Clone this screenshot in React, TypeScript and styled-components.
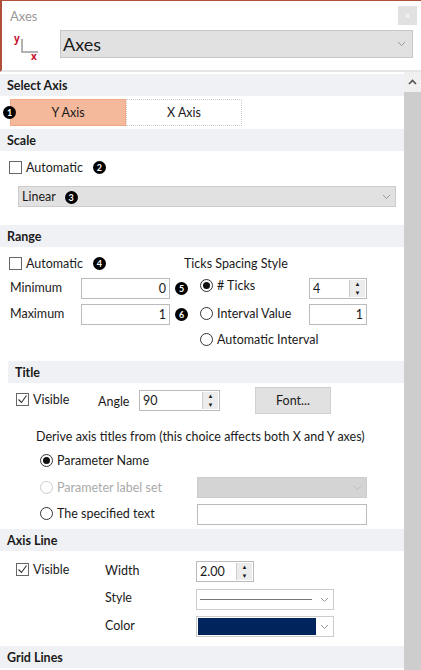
import React from "react";
import styled, { createGlobalStyle } from "styled-components";

const G = createGlobalStyle`
  html,body{margin:0;padding:0;background:#fff;}
  body{font-family:Lato,"Noto Sans",sans-serif;font-size:12.5px;color:#1a1a1a;width:421px;height:670px;overflow:hidden;}
`;
const Win = styled.div`width:421px;height:670px;border-top:1px solid #b0503a;box-sizing:border-box;display:flex;flex-direction:column;`;
const TitleBar = styled.div`height:29px;display:flex;align-items:center;justify-content:space-between;padding:0 4px 0 8px;color:#9a9a9a;font-size:13px;border-left:2px solid #b0503a;`;
const Close = styled.div`width:19px;height:19px;background:#e1e1e1;color:#fff;font-size:9px;display:flex;align-items:center;justify-content:center;`;
const Header = styled.div`display:flex;align-items:flex-start;padding-left:2px;border-left:2px solid #b0503a;border-bottom:2px solid #e6e6e6;box-sizing:border-box;height:42px;`;
const IconBox = styled.div`width:56px;height:40px;`;
const BigSelect = styled.div`flex:0 0 353px;height:28px;background:#e1e1e1;border:1px solid #c8c8c8;box-sizing:border-box;display:flex;align-items:center;justify-content:space-between;padding:0 6px 0 2px;font-size:18px;`;
const Body = styled.div`flex:1;display:flex;min-height:0;`;
const Content = styled.div`flex:1;display:flex;flex-direction:column;overflow:hidden;padding-top:2px;`;
const Scroll = styled.div`width:17px;display:flex;flex-direction:column;background:#f0f0f0;`;
const Up = styled.div`height:20px;display:flex;align-items:center;justify-content:center;`;
const Thumb = styled.div`flex:1;background:#cdcdcd;`;
const Head = styled.div<{ $indent?: number }>`height:22px;background:#f0f1f4;font-weight:700;font-size:12.5px;display:flex;align-items:center;padding-left:7px;margin-left:${p => p.$indent || 0}px;`;
const Sec = styled.div<{ $h: number; $indent?: number }>`height:${p => p.$h}px;position:relative;margin-left:${p => p.$indent || 0}px;`;
const Row = styled.div<{ $top: number; $left: number }>`position:absolute;top:${p => p.$top + 1}px;left:${p => p.$left}px;display:flex;align-items:center;gap:4px;white-space:nowrap;`;
const Seg = styled.div<{ $on?: boolean }>`width:116px;height:27px;display:flex;align-items:center;justify-content:center;background:${p => p.$on ? "#f4b89a" : "#fff"};border:1px ${p => p.$on ? "solid #f0a888" : "dotted #ccc"};box-sizing:border-box;`;
const Badge = styled.span`width:13px;height:13px;border-radius:50%;background:#000;color:#fff;font-size:9px;font-weight:700;display:inline-flex;align-items:center;justify-content:center;`;
const Box = styled.span`width:13px;height:13px;border:1px solid #666;box-sizing:border-box;display:inline-flex;align-items:center;justify-content:center;`;
const Radio = styled.span<{ $dis?: boolean }>`width:13px;height:13px;border-radius:50%;border:1px solid ${p => p.$dis ? "#ccc" : "#333"};box-sizing:border-box;display:inline-flex;align-items:center;justify-content:center;`;
const Dot = styled.span`width:7px;height:7px;border-radius:50%;background:#111;`;
const Input = styled.div<{ $w: number; $right?: boolean; $bg?: string }>`width:${p => p.$w}px;height:21px;border:1px solid #bbb;box-sizing:border-box;background:${p => p.$bg || "#fff"};display:flex;align-items:center;justify-content:${p => p.$right ? "flex-end" : "space-between"};padding:0 3px;`;
const Spin = styled.div`width:15px;height:17px;background:#ececec;border-left:1px solid #ccc;display:flex;flex-direction:column;align-items:center;justify-content:space-around;font-size:6px;line-height:6px;margin-right:-2px;`;
const Sel = styled.div<{ $w: number; $bg?: string }>`width:${p => p.$w}px;height:21px;background:${p => p.$bg || "#fff"};border:1px solid #ccc;box-sizing:border-box;display:flex;align-items:center;justify-content:space-between;padding:0 4px 0 3px;`;
const Btn = styled.div`width:74px;height:25px;background:#e1e1e1;border:1px solid #d0d0d0;display:flex;align-items:center;justify-content:center;`;
const Muted = styled.span`color:#aaa;`;

const Chev = ({ c = "#999" }: { c?: string }) => <svg width="9" height="6" viewBox="0 0 9 6"><path d="M1 1l3.5 3.5L8 1" fill="none" stroke={c} strokeWidth="1" /></svg>;
const Check = () => <svg width="11" height="11" viewBox="0 0 11 11"><path d="M1.5 5.5l3 3 5-7" fill="none" stroke="#333" strokeWidth="1.1" /></svg>;
const SpinBox = () => <Spin><span>▲</span><span>▼</span></Spin>;

export default function App() {
  return (
    <Win>
      <G />
      <TitleBar>Axes<Close>×</Close></TitleBar>
      <Header>
        <IconBox>
          <svg width="40" height="34" viewBox="0 0 40 34">
            <text x="10" y="12" fontSize="10" fill="#c8102e" fontWeight="700" fontFamily="Noto Sans">y</text>
            <path d="M18 9v13h16" fill="none" stroke="#999" strokeWidth="1.5" />
            <text x="27" y="30" fontSize="10" fill="#c8102e" fontWeight="700" fontFamily="Noto Sans">x</text>
          </svg>
        </IconBox>
        <BigSelect>Axes<Chev /></BigSelect>
      </Header>
      <Body>
        <Content>
          <Head>Select Axis</Head>
          <Sec $h={33}>
            <Row $top={2} $left={3} style={{ gap: 0 }}>
              <Badge style={{ marginRight: -6, zIndex: 1 }}>1</Badge>
              <Seg $on>Y Axis</Seg><Seg>X Axis</Seg>
            </Row>
          </Sec>
          <Head>Scale</Head>
          <Sec $h={74}>
            <Row $top={8} $left={9}><Box /><span>Automatic</span><Badge style={{ marginLeft: 6 }}>2</Badge></Row>
            <Row $top={34} $left={18}><Sel $w={378} $bg="#e1e1e1"><span>Linear <Badge style={{ marginLeft: 6 }}>3</Badge></span><Chev /></Sel></Row>
          </Sec>
          <Head>Range</Head>
          <Sec $h={114}>
            <Row $top={8} $left={9}><Box /><span>Automatic</span><Badge style={{ marginLeft: 6 }}>4</Badge></Row>
            <Row $top={8} $left={184}>Ticks Spacing Style</Row>
            <Row $top={32} $left={10}>Minimum</Row>
            <Row $top={30} $left={81}><Input $w={89} $right>0</Input><Badge style={{ marginLeft: 1 }}>5</Badge></Row>
            <Row $top={30} $left={200}><Radio><Dot /></Radio>#&nbsp;Ticks</Row>
            <Row $top={30} $left={309}><Input $w={58}><span>4</span><SpinBox /></Input></Row>
            <Row $top={58} $left={10}>Maximum</Row>
            <Row $top={56} $left={81}><Input $w={89} $right>1</Input><Badge style={{ marginLeft: 1 }}>6</Badge></Row>
            <Row $top={58} $left={200}><Radio />Interval Value</Row>
            <Row $top={56} $left={309}><Input $w={58} $right>1</Input></Row>
            <Row $top={84} $left={200}><Radio />Automatic Interval</Row>
          </Sec>
          <Head $indent={8}>Title</Head>
          <Sec $h={146} $indent={8}>
            <Row $top={8} $left={8}><Box><Check /></Box><span>Visible</span></Row>
            <Row $top={10} $left={90}>Angle</Row>
            <Row $top={6} $left={131}><Input $w={81}><span>90</span><SpinBox /></Input></Row>
            <Row $top={3} $left={247}><Btn>Font...</Btn></Row>
            <Row $top={45} $left={28}>Derive axis titles from (this choice affects both X and Y axes)</Row>
            <Row $top={69} $left={32}><Radio><Dot /></Radio>Parameter Name</Row>
            <Row $top={96} $left={32}><Radio $dis /><Muted>Parameter label set</Muted></Row>
            <Row $top={93} $left={189}><Sel $w={170} $bg="#d4d4d4"><span /><Chev c="#bbb" /></Sel></Row>
            <Row $top={122} $left={32}><Radio />The specified text</Row>
            <Row $top={120} $left={189}><Input $w={170} /></Row>
          </Sec>
          <Head>Axis Line</Head>
          <Sec $h={95}>
            <Row $top={10} $left={16}><Box><Check /></Box><span>Visible</span></Row>
            <Row $top={11} $left={105}>Width</Row>
            <Row $top={9} $left={196}><Input $w={58}><span>2.00</span><SpinBox /></Input></Row>
            <Row $top={38} $left={105}>Style</Row>
            <Row $top={37} $left={196}><Sel $w={138}><span style={{ width: 112, borderTop: "1px solid #777" }} /><Chev /></Sel></Row>
            <Row $top={66} $left={105}>Color</Row>
            <Row $top={64} $left={196}><Sel $w={138}><span style={{ width: 118, height: 17, background: "#00245c", marginLeft: -2 }} /><Chev /></Sel></Row>
          </Sec>
          <Head>Grid Lines</Head>
        </Content>
        <Scroll>
          <Up><svg width="9" height="6" viewBox="0 0 9 6"><path d="M1 5l3.5-3.5L8 5" fill="none" stroke="#555" strokeWidth="1.6" /></svg></Up>
          <Thumb />
        </Scroll>
      </Body>
    </Win>
  );
}
